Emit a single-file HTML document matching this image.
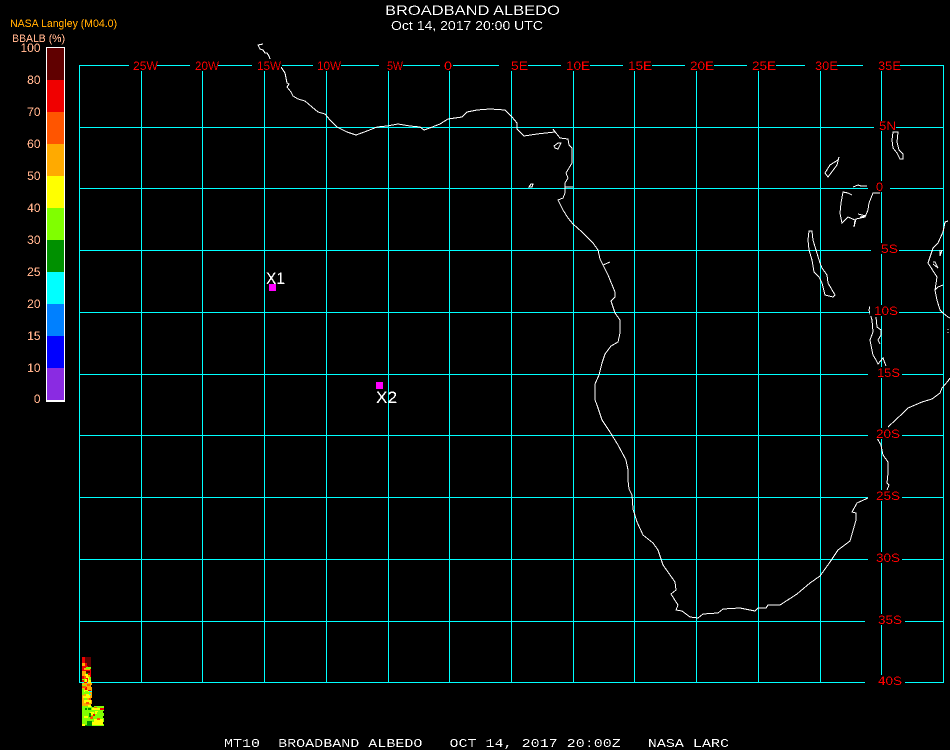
<!DOCTYPE html>
<html><head><meta charset="utf-8"><style>
html,body{margin:0;padding:0;background:#000;width:950px;height:750px;overflow:hidden}
svg{display:block}
text{font-family:"Liberation Sans",sans-serif}
.m text,text.m{font-family:"Liberation Mono",monospace}
</style></head><body>
<svg width="950" height="750" viewBox="0 0 950 750" xmlns="http://www.w3.org/2000/svg">
<defs>
<filter id="t" filterUnits="userSpaceOnUse" x="0" y="0" width="950" height="750" color-interpolation-filters="sRGB"><feComponentTransfer><feFuncA type="discrete" tableValues="0 0 1 1 1"/></feComponentTransfer></filter>
<filter id="u" filterUnits="userSpaceOnUse" x="0" y="0" width="950" height="750" color-interpolation-filters="sRGB"><feComponentTransfer><feFuncA type="discrete" tableValues="0 0 0 1 1"/></feComponentTransfer></filter>
</defs>
<rect width="950" height="750" fill="#000"/>
<g fill="#0ff" shape-rendering="crispEdges">
<rect x="79" y="65" width="865" height="1"/><rect x="79" y="127" width="865" height="1"/><rect x="79" y="188" width="865" height="1"/><rect x="79" y="250" width="865" height="1"/><rect x="79" y="312" width="865" height="1"/><rect x="79" y="374" width="865" height="1"/><rect x="79" y="435" width="865" height="1"/><rect x="79" y="497" width="865" height="1"/><rect x="79" y="559" width="865" height="1"/><rect x="79" y="621" width="865" height="1"/><rect x="79" y="682" width="865" height="1"/>
<rect x="79" y="65" width="1" height="618"/><rect x="141" y="65" width="1" height="618"/><rect x="202" y="65" width="1" height="618"/><rect x="264" y="65" width="1" height="618"/><rect x="326" y="65" width="1" height="618"/><rect x="388" y="65" width="1" height="618"/><rect x="449" y="65" width="1" height="618"/><rect x="511" y="65" width="1" height="618"/><rect x="573" y="65" width="1" height="618"/><rect x="634" y="65" width="1" height="618"/><rect x="696" y="65" width="1" height="618"/><rect x="758" y="65" width="1" height="618"/><rect x="820" y="65" width="1" height="618"/><rect x="881" y="65" width="1" height="618"/><rect x="943" y="65" width="1" height="618"/>
</g>
<g fill="none" stroke="#fff" stroke-width="1" shape-rendering="crispEdges">
<polyline points="263,44 258,45 260,49 263,50 265,53 267,53 269,56 270,59"/>
<polyline points="281,67 285,73 287,83 289,84 287,87 291,92 293,96 298,99 305,101 312,107 318,112 325,114 330,120 337,127 347,132 356,135 367,131 377,127 387,126 398,124 410,126 420,127 424,130 427,129 440,124 448,119 462,117 467,112 477,110 490,109 505,110 512,117 517,123 517,129 524,136 537,134 555,132 553,129 556,133 560,138 568,139 569,145 572,148 572,163 566,173 568,178 565,183 565,193 563,198 558,200 563,210 568,218 573,224 582,232 593,243 598,250 600,259 603,265 610,262 603,265 608,275 615,292 615,297 611,301 615,313 620,320 620,333 618,342 611,346 605,354 602,363 599,375 595,384 595,400 597,405 602,420 610,432 618,445 626,460 628,470 628,480 629,489 632,495 633,509 637,522 643,535 653,543 658,550 663,565 675,582 676,590 671,594 678,605 676,610 682,611 690,617 698,618 703,614 718,613 723,609 740,608 755,611 758,608 766,608 768,605 780,605 797,594 810,583 820,576 830,562 838,550 850,541 856,520 856,513 852,512 857,503 868,498"/>
<polyline points="565,187 573,187"/>
<polygon points="558,143 561,143 558,149 555,148 554,146"/>
<polygon points="529,187 531,184 533,184 532,187"/>
<polyline points="877,438 881,445 883,455 888,462 888,473 887,483 889,485 887,490"/>
<polyline points="888,427 903,413 908,408 922,402 932,399 940,393 942,388 948,381 950,378"/>
<polyline points="870,306 869,310 872,320 873,332 870,340 873,355 876,360 878,364 883,358 886,366"/>
<polyline points="876,317 877,327 881,330 881,335 878,340 880,344"/>
<polygon points="893,132 898,132 897,142 899,150 903,154 903,159 900,159 897,153 893,148 892,140"/>
<polygon points="839,157 837,165 828,177 825,173 830,165 838,160"/>
<polyline points="853,187 858,185 861,186 867,186"/>
<polyline points="852,195 848,193 843,192 841,203 840,213 842,223 848,217 855,220 854,227 856,219 865,217 868,210 869,203 873,193 880,193"/>
<polyline points="858,214 866,216 860,217"/>
<polygon points="809,231 812,231 813,240 816,250 820,263 822,268 827,275 828,283 835,295 833,297 825,295 822,283 819,277 814,272 812,260 809,250 808,240"/>
<polyline points="948,221 945,222 943,232 938,243 933,248 928,263 937,277 935,290 937,300 940,310 943,313 948,317 950,318"/>
<polyline points="933,262 935,262 938,268 933,264"/>
<polyline points="940,250 940,256 942,250"/>
<polyline points="935,290 938,287 943,285"/>
<polyline points="948,329 948,330"/><polyline points="948,332 948,333"/>
</g>
<g fill="#000" shape-rendering="crispEdges">
<rect x="129" y="59" width="28" height="12"/><rect x="190" y="59" width="28" height="12"/><rect x="252" y="59" width="30" height="7"/><rect x="252" y="66" width="29" height="5"/><rect x="313" y="59" width="28" height="12"/><rect x="379" y="59" width="24" height="12"/><rect x="440" y="59" width="13" height="12"/><rect x="499" y="59" width="29" height="12"/><rect x="561" y="59" width="29" height="12"/><rect x="623" y="59" width="29" height="12"/><rect x="685" y="59" width="29" height="12"/><rect x="747" y="59" width="29" height="12"/><rect x="805" y="59" width="32" height="12"/><rect x="863" y="59" width="37" height="12"/>
<rect x="874" y="121" width="22" height="10"/><rect x="868" y="181" width="22" height="11"/><rect x="871" y="243" width="28" height="11"/><rect x="870" y="305" width="29" height="11"/><rect x="868" y="367" width="34" height="11"/><rect x="868" y="428" width="34" height="11"/><rect x="868" y="490" width="34" height="11"/><rect x="868" y="552" width="34" height="11"/><rect x="865" y="614" width="40" height="11"/><rect x="865" y="675" width="40" height="11"/>
</g>
<g shape-rendering="crispEdges">
<rect x="46" y="47" width="19" height="355" fill="#fff"/>
<rect x="47" y="48" width="17" height="32" fill="#600000"/><rect x="47" y="80" width="17" height="32" fill="#f00000"/><rect x="47" y="112" width="17" height="32" fill="#ff5500"/><rect x="47" y="144" width="17" height="32" fill="#ffaa00"/><rect x="47" y="176" width="17" height="32" fill="#ffff00"/><rect x="47" y="208" width="17" height="32" fill="#80ff00"/><rect x="47" y="240" width="17" height="32" fill="#009000"/><rect x="47" y="272" width="17" height="32" fill="#00ffff"/><rect x="47" y="304" width="17" height="32" fill="#0080ff"/><rect x="47" y="336" width="17" height="32" fill="#0000ff"/><rect x="47" y="368" width="17" height="32" fill="#8a2be2"/>
<rect x="269" y="284" width="7" height="7" fill="#f0f"/><rect x="376" y="382" width="7" height="7" fill="#f0f"/>
<rect x="82" y="657" width="9" height="25" fill="#f00000"/>
<rect x="82" y="683" width="10" height="23" fill="#ffaa00"/>
<rect x="82" y="706" width="22" height="20" fill="#80ff00"/>
<path fill="#600000" d="M85 657h6v6h-6zM87 663h4v3h-4zM88 665h3v2h-3zM86 671h4v2h-4z"/>
<path fill="#ffaa00" d="M82 663h3v3h-3zM84 668h6v2h-6zM82 671h4v5h-4zM87 675h3v2h-3z"/>
<path fill="#ffff00" d="M85 674h3v4h-3zM88 677h3v6h-3zM84 679h3v3h-3zM83 690h6v2h-6zM86 693h4v3h-4zM83 696h7v2h-7zM84 700h7v3h-7zM88 705h3v2h-3zM90 712h4v3h-4zM92 708h9v2h-9zM95 711h3v3h-3zM94 719h9v6h-9zM88 722h6v3h-6zM82 724h3v2h-3zM84 716h4v2h-4z"/>
<path fill="#80ff00" d="M86 667h5v2h-5zM82 679h3v3h-3zM89 677h2v3h-2zM82 685h4v2h-4zM82 689h2v6h-2zM85 691h3v2h-3zM82 692h8v2h-8zM84 698h3v2h-3zM97 712h5v6h-5z"/>
<path fill="#f00000" d="M82 680h2v2h-2zM84 682h3v1h-3zM85 687h2v3h-2zM88 690h3v1h-3zM100 708h4v2h-4zM93 714h2v2h-2z"/>
<path fill="#ff5500" d="M84 676h2v3h-2zM87 684h3v2h-3zM82 686h4v2h-4zM89 698h3v2h-3zM86 702h3v2h-3zM94 707h3v1h-3zM97 718h3v2h-3zM90 716h3v3h-3z"/>
<path fill="#009000" d="M86 673h2v1h-2zM88 708h3v2h-3zM89 713h2v4h-2zM87 721h5v5h-5zM85 725h3v1h-3zM85 708h2v2h-2z"/>
<path fill="#0ff" d="M89 691h3v1h-3zM89 694h2v1h-2z"/>
<path fill="#000" d="M91 676h1v2h-1zM91 685h1v2h-1zM91 698h1v2h-1zM91 704h1v2h-1zM92 706h2v1h-2zM103 711h1v2h-1zM103 716h1v2h-1zM103 722h1v2h-1z"/>
</g>
<g filter="url(#u)">
<text x="385" y="15" font-size="14" fill="#fff" textLength="175" lengthAdjust="spacingAndGlyphs">BROADBAND ALBEDO</text>
<text x="391" y="30" font-size="13" fill="#fff" textLength="152" lengthAdjust="spacingAndGlyphs">Oct 14, 2017 20:00 UTC</text>
</g>
<g filter="url(#t)">
<text x="10" y="27" font-size="11" fill="#ffa500" textLength="107" lengthAdjust="spacingAndGlyphs">NASA Langley (M04.0)</text>
<text x="12" y="42" font-size="11" fill="#ffb08a" textLength="53" lengthAdjust="spacingAndGlyphs">BBALB (%)</text>
<g fill="#ffb08a" font-size="12" text-anchor="end">
<text x="40.5" y="52">100</text><text x="40.5" y="84">80</text><text x="40.5" y="116">70</text><text x="40.5" y="148">60</text><text x="40.5" y="180">50</text><text x="40.5" y="212">40</text><text x="40.5" y="244">30</text><text x="40.5" y="276">25</text><text x="40.5" y="308">20</text><text x="40.5" y="340">15</text><text x="40.5" y="372">10</text><text x="40.5" y="403">0</text>
</g>
</g>
<g filter="url(#u)">
<g fill="#f00" font-size="11.5">
<text x="133" y="70" textLength="25" lengthAdjust="spacingAndGlyphs">25W</text><text x="195" y="70" textLength="24" lengthAdjust="spacingAndGlyphs">20W</text><text x="257" y="70" textLength="24" lengthAdjust="spacingAndGlyphs">15W</text><text x="317" y="70" textLength="24" lengthAdjust="spacingAndGlyphs">10W</text><text x="387" y="70" textLength="16" lengthAdjust="spacingAndGlyphs">5W</text><text x="444" y="70" textLength="8" lengthAdjust="spacingAndGlyphs">0</text><text x="511" y="70" textLength="17" lengthAdjust="spacingAndGlyphs">5E</text><text x="566" y="70" textLength="24" lengthAdjust="spacingAndGlyphs">10E</text><text x="628" y="70" textLength="24" lengthAdjust="spacingAndGlyphs">15E</text><text x="690" y="70" textLength="24" lengthAdjust="spacingAndGlyphs">20E</text><text x="752" y="70" textLength="24" lengthAdjust="spacingAndGlyphs">25E</text><text x="815" y="70" textLength="23" lengthAdjust="spacingAndGlyphs">30E</text><text x="878" y="70" textLength="23" lengthAdjust="spacingAndGlyphs">35E</text>
<text x="879" y="130" textLength="17" lengthAdjust="spacingAndGlyphs">5N</text><text x="876" y="191" textLength="7" lengthAdjust="spacingAndGlyphs">0</text><text x="881" y="253" textLength="17" lengthAdjust="spacingAndGlyphs">5S</text><text x="874" y="315" textLength="24" lengthAdjust="spacingAndGlyphs">10S</text><text x="877" y="377" textLength="23" lengthAdjust="spacingAndGlyphs">15S</text><text x="876" y="438" textLength="24" lengthAdjust="spacingAndGlyphs">20S</text><text x="876" y="500" textLength="24" lengthAdjust="spacingAndGlyphs">25S</text><text x="876" y="562" textLength="24" lengthAdjust="spacingAndGlyphs">30S</text><text x="878" y="624" textLength="24" lengthAdjust="spacingAndGlyphs">35S</text><text x="878" y="685" textLength="24" lengthAdjust="spacingAndGlyphs">40S</text>
</g>
<text class="m" x="224" y="747" font-size="11.5" fill="#fff" xml:space="preserve" style="white-space:pre" textLength="505" lengthAdjust="spacingAndGlyphs">MT10  BROADBAND ALBEDO   OCT 14, 2017 20:00Z   NASA LARC</text>
</g>
<g filter="url(#t)">
<text x="266" y="284" font-size="17" fill="#fff" textLength="19" lengthAdjust="spacingAndGlyphs">X1</text>
<text x="376" y="403" font-size="17" fill="#fff" textLength="21" lengthAdjust="spacingAndGlyphs">X2</text>
</g>
</svg>
</body></html>
